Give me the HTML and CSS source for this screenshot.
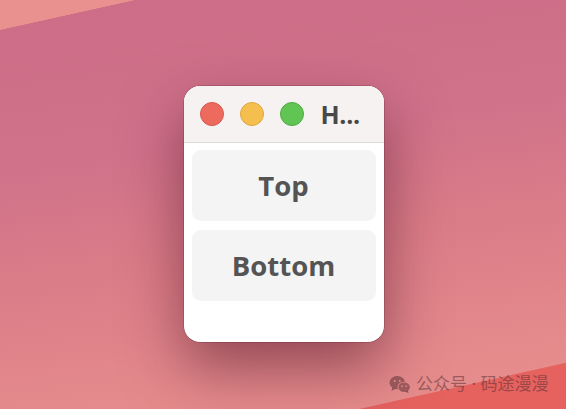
FILE: index.html
```html
<!DOCTYPE html>
<html lang="en">
<head>
<meta charset="utf-8">
<title>Window</title>
<link rel="stylesheet" href="styles.css">
</head>
<body>
<div class="desktop">
  <div class="window">
    <div class="titlebar">
      <span class="light red"></span>
      <span class="light yellow"></span>
      <span class="light green"></span>
      <span class="title">H...</span>
    </div>
    <div class="content">
      <div class="btn">Top</div>
      <div class="btn">Bottom</div>
    </div>
  </div>
  <div class="watermark">
    <svg class="wechat" width="22" height="19" viewBox="0 0 24 20" aria-hidden="true">
      <ellipse cx="9" cy="8" rx="8.5" ry="7.2" fill="currentColor"/>
      <path d="M3.5 13.5 L2.8 17 L7 14.6 Z" fill="currentColor"/>
      <circle cx="6.2" cy="6.2" r="1.1" fill="#e88a8a"/>
      <circle cx="11.8" cy="6.2" r="1.1" fill="#e88a8a"/>
      <ellipse cx="16.5" cy="13" rx="7.2" ry="6" fill="#e88a8a"/>
      <ellipse cx="16.5" cy="13" rx="6.3" ry="5.3" fill="currentColor"/>
      <path d="M20.5 16.5 L21.5 19.5 L17.8 17.8 Z" fill="currentColor"/>
      <circle cx="14.3" cy="11.8" r="0.9" fill="#e88a8a"/>
      <circle cx="18.7" cy="11.8" r="0.9" fill="#e88a8a"/>
    </svg>
    <span>公众号 · 码途漫漫</span>
  </div>
</div>
</body>
</html>
```
FILE: styles.css
```css
html, body {
  margin: 0;
  padding: 0;
}
body {
  width: 566px;
  height: 409px;
  overflow: hidden;
  font-family: "Open Sans", "Noto Sans", "Noto Sans CJK SC", sans-serif;
}
.desktop {
  position: relative;
  width: 566px;
  height: 409px;
  box-sizing: border-box;
  padding: 86px 0 0 1px;
  display: flex;
  justify-content: center;
  align-items: flex-start;
  background:
    linear-gradient(167.5deg, #e8918f 0, #e8918f 29px, transparent 29.5px),
    linear-gradient(167.4deg, transparent 477px, #e5625f 478px),
    linear-gradient(172deg, #cd6d87 0%, #d0728a 35%, #db7d88 60%, #e48a8c 85%, #e88f8c 100%);
}
.window {
  width: 200px;
  height: 256px;
  background: #ffffff;
  border-radius: 16px;
  overflow: hidden;
  box-shadow: 0 26px 60px rgba(80, 20, 40, 0.55), 0 0 0 0.5px rgba(90, 40, 50, 0.5);
  display: flex;
  flex-direction: column;
}
.titlebar {
  height: 56px;
  flex: none;
  background: #f6f2f1;
  border-bottom: 1px solid #dcdada;
  display: flex;
  align-items: center;
  padding: 0 8px 0 16px;
  gap: 16px;
}
.light {
  width: 24px;
  height: 24px;
  border-radius: 50%;
  box-sizing: border-box;
  flex: none;
}
.red { background: #ec6a5e; border: 1px solid #d8574c; }
.yellow { background: #f5bf4f; border: 1px solid #dea53b; }
.green { background: #61c554; border: 1px solid #4dab40; }
.title {
  flex: 1;
  min-width: 0;
  margin-left: 1px;
  font-size: 25px;
  font-weight: 700;
  color: #484848;
  white-space: nowrap;
  letter-spacing: -0.3px;
}
.content {
  padding: 7px 8px;
  display: flex;
  flex-direction: column;
  gap: 9px;
}
.btn {
  height: 71px;
  background: #f4f4f4;
  border-radius: 9px;
  display: flex;
  align-items: center;
  justify-content: center;
  font-size: 27.5px;
  font-weight: 700;
  color: #545454;
}
.watermark {
  position: absolute;
  left: 389px;
  top: 374px;
  display: flex;
  align-items: center;
  gap: 5px;
  color: rgba(80, 40, 45, 0.5);
  font-family: "Noto Sans", "Noto Sans CJK SC", sans-serif;
  font-size: 17px;
  line-height: 20px;
}
.wechat {
  display: block;
}
```
